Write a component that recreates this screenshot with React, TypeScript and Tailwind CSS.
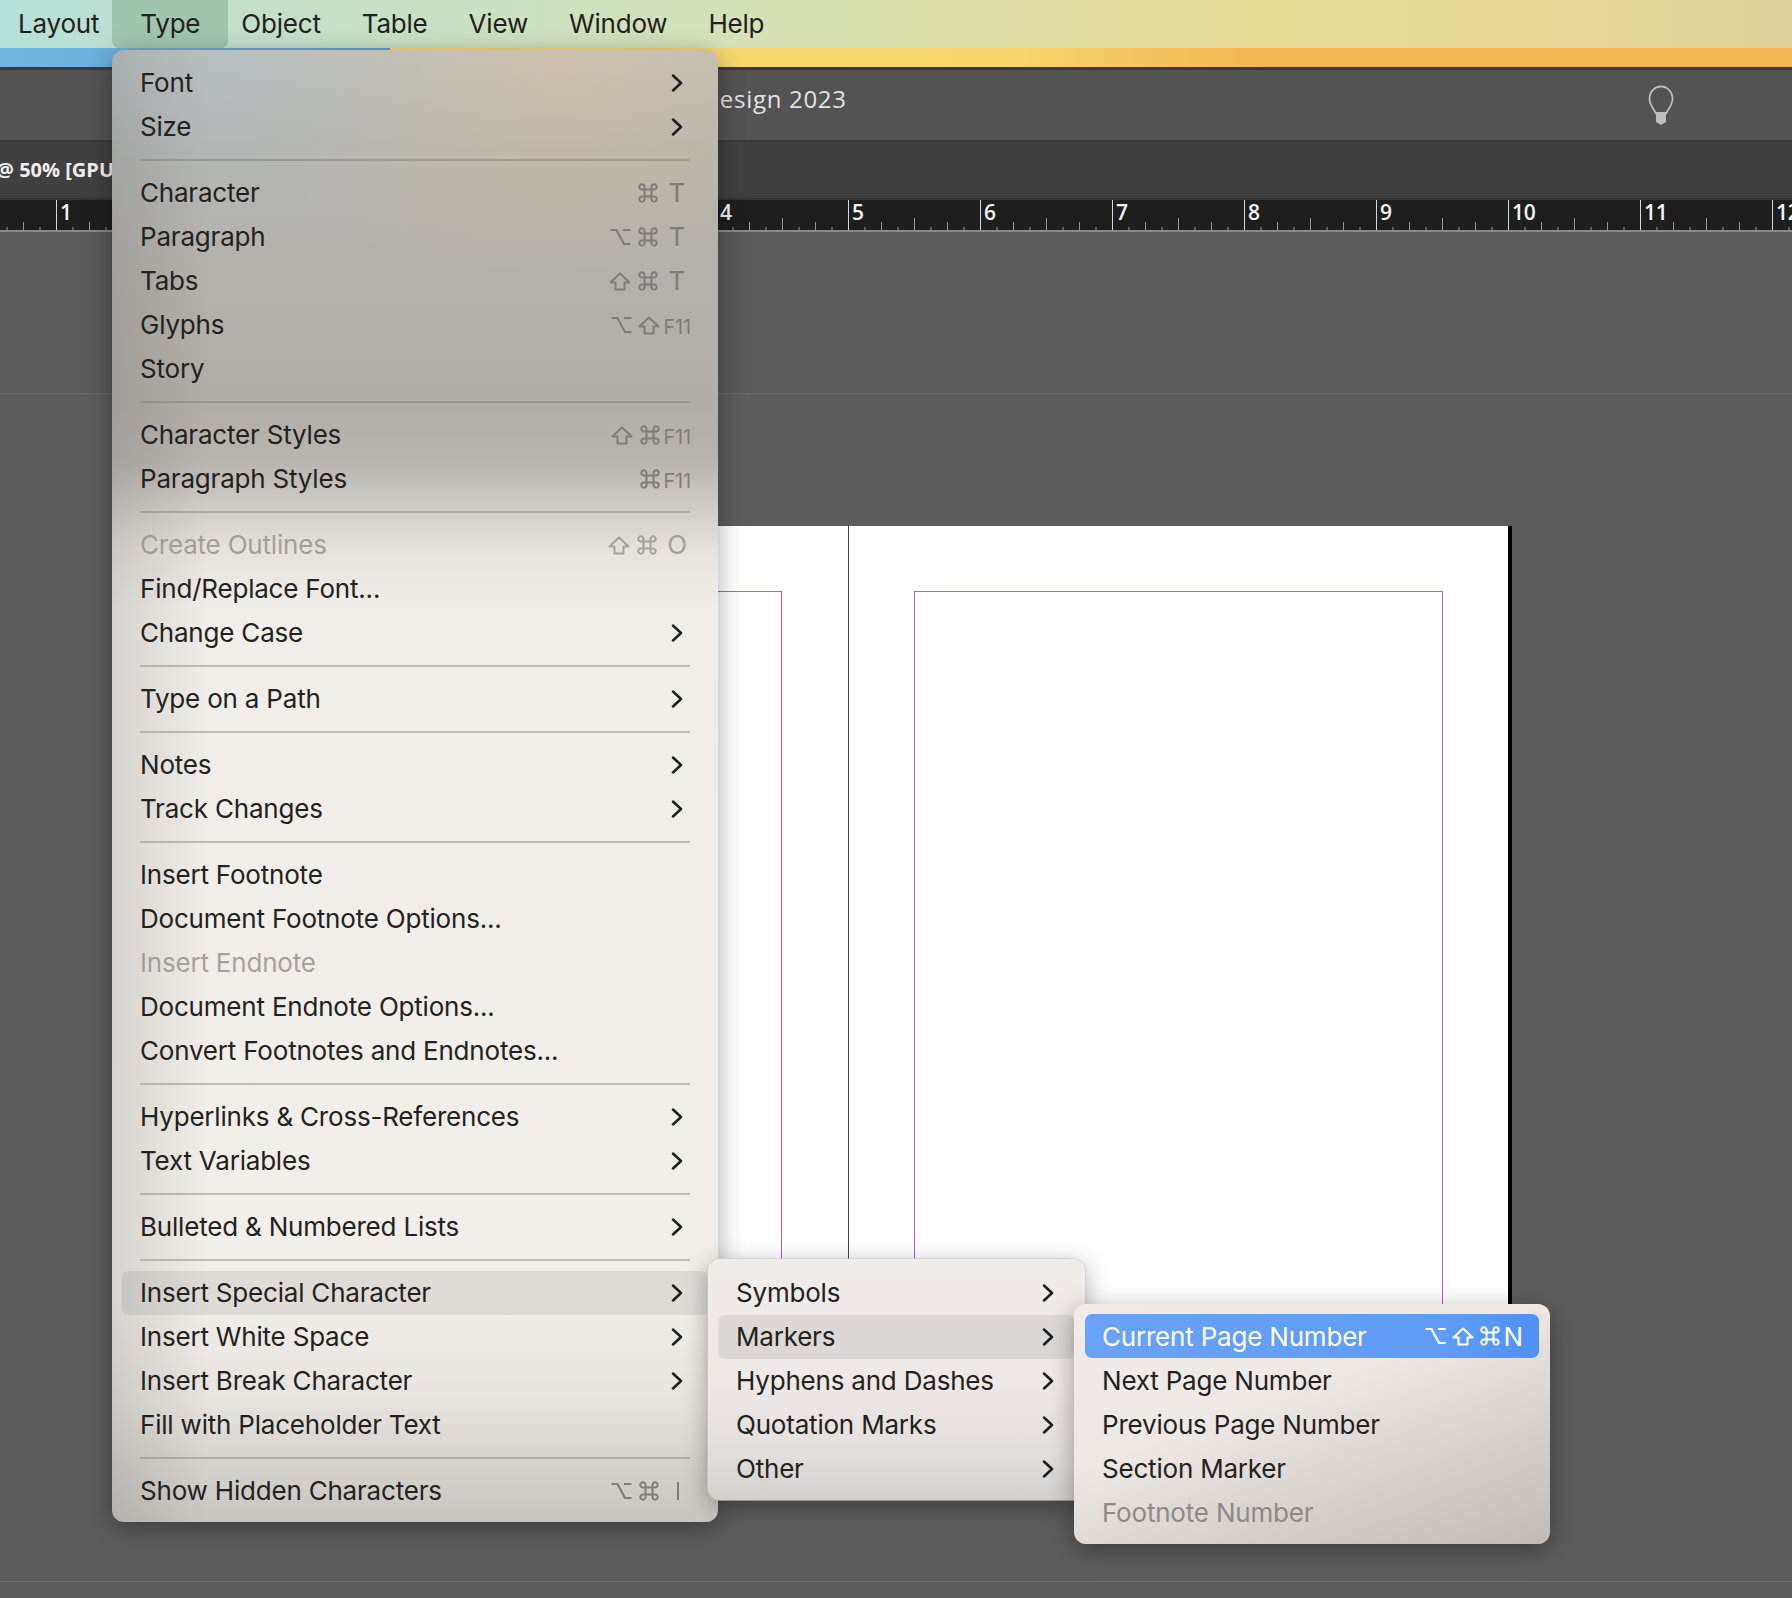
import React from "react";

type Row = {
  label: string;
  arrow?: boolean;
  disabled?: boolean;
  active?: boolean;
  keys?: string[];
};

// main Type menu, one array per separated group
const typeMenu: Row[][] = [
  [
    { label: "Font", arrow: true },
    { label: "Size", arrow: true },
  ],
  [
    { label: "Character", keys: ["cmd", "T"] },
    { label: "Paragraph", keys: ["opt", "cmd", "T"] },
    { label: "Tabs", keys: ["shift", "cmd", "T"] },
    { label: "Glyphs", keys: ["opt", "shift", "F11"] },
    { label: "Story" },
  ],
  [
    { label: "Character Styles", keys: ["shift", "cmd", "F11"] },
    { label: "Paragraph Styles", keys: ["cmd", "F11"] },
  ],
  [
    { label: "Create Outlines", disabled: true, keys: ["shift", "cmd", "O"] },
    { label: "Find/Replace Font..." },
    { label: "Change Case", arrow: true },
  ],
  [{ label: "Type on a Path", arrow: true }],
  [
    { label: "Notes", arrow: true },
    { label: "Track Changes", arrow: true },
  ],
  [
    { label: "Insert Footnote" },
    { label: "Document Footnote Options..." },
    { label: "Insert Endnote", disabled: true },
    { label: "Document Endnote Options..." },
    { label: "Convert Footnotes and Endnotes..." },
  ],
  [
    { label: "Hyperlinks & Cross-References", arrow: true },
    { label: "Text Variables", arrow: true },
  ],
  [{ label: "Bulleted & Numbered Lists", arrow: true }],
  [
    { label: "Insert Special Character", arrow: true, active: true },
    { label: "Insert White Space", arrow: true },
    { label: "Insert Break Character", arrow: true },
    { label: "Fill with Placeholder Text" },
  ],
  [{ label: "Show Hidden Characters", keys: ["opt", "cmd", "I"] }],
];

const specialChars: Row[] = [
  { label: "Symbols", arrow: true },
  { label: "Markers", arrow: true, active: true },
  { label: "Hyphens and Dashes", arrow: true },
  { label: "Quotation Marks", arrow: true },
  { label: "Other", arrow: true },
];

const markers = ["Next Page Number", "Previous Page Number", "Section Marker"];

const menuBar = ["Layout", "Type", "Object", "Table", "View", "Window", "Help"];

function Chevron() {
  return (
    <svg width="12" height="18" viewBox="0 0 12 18" fill="none" className="shrink-0">
      <path d="M2 1.5 10 9 2 16.5" stroke="#1f1e1d" strokeWidth="2.5" strokeLinecap="round" strokeLinejoin="round" />
    </svg>
  );
}

function CmdIcon() {
  return (
    <svg width="20" height="20" viewBox="0 0 20 20" fill="none" stroke="currentColor" strokeWidth="2" className="shrink-0">
      <path d="M6.5 6.5h7v7h-7zM6.5 6.5H4.3a2.6 2.6 0 1 1 2.2-2.4zM13.5 6.5V4.1a2.6 2.6 0 1 1 2.2 2.4zM13.5 13.5h2.2a2.6 2.6 0 1 1-2.2 2.4zM6.5 13.5v2.4a2.6 2.6 0 1 1-2.2-2.4z" />
    </svg>
  );
}

function OptIcon() {
  return (
    <svg width="21" height="18" viewBox="0 0 21 18" fill="none" stroke="currentColor" strokeWidth="2.2" className="shrink-0">
      <path d="M0.5 2h6L14 16h6.5M13 2h7.5" />
    </svg>
  );
}

function ShiftIcon() {
  return (
    <svg width="22" height="19" viewBox="0 0 22 19" fill="none" stroke="currentColor" strokeWidth="2" strokeLinejoin="round" className="shrink-0">
      <path d="M11 1.5 20.5 10.5H15.5V17.5H6.5V10.5H1.5Z" />
    </svg>
  );
}

function Keys({ keys, dim }: { keys: string[]; dim?: boolean }) {
  return (
    <span className={`flex items-center ml-auto ${dim ? "text-[#a3a19d]" : "text-[#7f7d79]"}`}>
      {keys.map((k) => {
        if (k === "cmd") return <span key={k} className="ml-[7px]"><CmdIcon /></span>;
        if (k === "opt") return <span key={k} className="ml-[6px]"><OptIcon /></span>;
        if (k === "shift") return <span key={k} className="ml-[6px]"><ShiftIcon /></span>;
        if (k === "F11")
          return (
            <span key={k} className="ml-[4px] -mr-[1px] text-[20px] leading-none mt-[3px]">
              F11
            </span>
          );
        if (k === "I")
          return <span key={k} className="ml-[18px] mr-[11px] w-[2px] h-[18px] bg-[#7f7d79]" />;
        if (k === "O")
          return (
            <span key={k} className="ml-[10px] mr-[3px] text-[26px] leading-none">
              {k}
            </span>
          );
        return (
          <span key={k} className="ml-[10px] mr-[5px] text-[26px] leading-none">
            {k}
          </span>
        );
      })}
    </span>
  );
}

function MenuRow({ row, sub }: { row: Row; sub?: boolean }) {
  return (
    <div
      className={`flex items-center h-[44px] mx-[10px] px-[18px] rounded-[7px] ${
        row.active ? "bg-[#3c3a37]/10" : ""
      } ${row.disabled ? "text-[#8f8d89]/80" : "text-[#232220]"}`}
    >
      <span className="whitespace-nowrap -translate-y-[1px]">{row.label}</span>
      {row.keys && <Keys keys={row.keys} dim={row.disabled} />}
      {row.arrow && (
        <span className={sub ? "ml-auto mr-[3px]" : "ml-auto mr-[7px]"}>
          <Chevron />
        </span>
      )}
    </div>
  );
}

function Ruler() {
  const ticks = [];
  for (let i = 0; i < 120; i++) {
    const x = 56 - 132 + i * 16.5;
    const step = i % 8;
    const top = step === 0 ? 0 : step === 4 ? 18 : step % 2 === 0 ? 22 : 27;
    ticks.push(<line key={i} x1={x + 0.5} x2={x + 0.5} y1={top} y2={30} stroke={step === 0 ? "#d8d8d8" : "#9a9a9a"} strokeWidth="1" />);
  }
  const labels: [string, number][] = [["1", 56], ["4", 716], ["5", 848], ["6", 980], ["7", 1112], ["8", 1244], ["9", 1376], ["10", 1508], ["11", 1640], ["12", 1772]];
  return (
    <svg width="1792" height="30" className="block">
      {ticks}
      {labels.map(([t, x]) => (
        <text key={t} x={x + 4} y={20} fill="#f4f4f4" fontSize="21" fontWeight="600" fontFamily="'Open Sans', sans-serif">
          {t}
        </text>
      ))}
    </svg>
  );
}

export default function App() {
  return (
    <div className="relative w-[1792px] h-[1598px] overflow-hidden bg-[#5b5b5b] tracking-[-0.2px] font-['Inter','Liberation_Sans',sans-serif]">
      {/* macOS menu bar */}
      <div className="flex h-[48px] items-center pl-[18px] pb-[2px] text-[26px] text-[#232220] bg-[linear-gradient(90deg,#b6e0d8_0%,#c6e0c8_18%,#d8e2b4_45%,#e9dd98_70%,#ead896_85%,#e0d09a_100%)]">
        {menuBar.map((m) => (
          <span
            key={m}
            className={
              m === "Type"
                ? "flex items-center justify-center h-[48px] -mb-[2px] pb-[2px] w-[116px] ml-[13px] mr-[13px] rounded-b-[7px] bg-[#7fa98c]/50"
                : m === "Layout"
                  ? ""
                  : "mr-[41px] last:mr-0"
            }
          >
            {m}
          </span>
        ))}
      </div>
      {/* desktop wallpaper strip */}
      <div className="flex h-[19px]">
        <div className="w-[390px] bg-[linear-gradient(90deg,#72b6de,#5c9fdc)]" />
        <div className="flex-1 bg-[linear-gradient(90deg,#f6d970_0%,#f7d56c_45%,#f2b651_62%,#f2b550_100%)]" />
      </div>
      <div className="h-[3px] bg-[#3a3a3a]" />

      {/* title bar */}
      <div className="flex items-center justify-between h-[70px] bg-[#535353] pl-[596px] pr-[118px]">
        <span className="whitespace-nowrap mb-[12px] text-[24px] font-medium tracking-[0.7px] text-[#e2e2e2] font-['Open_Sans',sans-serif]">
          Adobe InDesign 2023
        </span>
        <svg width="26" height="40" viewBox="0 0 26 40" fill="none">
          <path d="M13 1.5C6.5 1.5 1.5 7 1.5 14c0 6 3.8 9.5 6.5 14.5h10C20.7 23.5 24.5 20 24.5 14 24.5 7 19.5 1.5 13 1.5Z" stroke="#bdbdbd" strokeWidth="1.8" />
          <path d="M8 27h10v10l-5 3-5-3Z" fill="#bdbdbd" />
        </svg>
      </div>
      <div className="h-[2px] bg-[#383838]" />

      {/* document tab */}
      <div className="flex items-center h-[56px] bg-[#404040] -ml-[4px] text-[20px] font-bold tracking-normal text-[#efefef] font-['Open_Sans',sans-serif]">
        <span className="whitespace-nowrap">@ 50% [GPU Preview]</span>
      </div>
      <div className="h-[2px] bg-[#353535]" />
      <div className="h-[30px] bg-[#1e1e1e]">
        <Ruler />
      </div>
      <div className="h-[2px] bg-[#8a8a8a]" />

      {/* pasteboard */}
      <div className="h-[162px] bg-[#595959] border-b border-[#6b6b6b]" />
      <div className="h-[1188px] pt-[132px] pl-[187px] bg-[#5c5c5c] border-b border-[#6e6e6e]">
        <div className="flex w-[1325px] h-[914px] bg-white border-r-[4px] border-black">
          <div className="w-[662px] h-full pt-[65px] pb-[65px] pr-[66px] border-r border-[#444]">
            <div className="h-full ml-[66px] border border-[#a95cf0]" />
          </div>
          <div className="flex-1 h-full pt-[65px] pb-[65px] pl-[65px] pr-[65px]">
            <div className="h-full border border-[#a95cf0]" />
          </div>
        </div>
      </div>

      {/* Type menu */}
      <div className="absolute left-[112px] top-[50px] w-[606px] h-[1472px] pt-[11px] pb-[9px] rounded-[12px] text-[26px] shadow-[0_6px_26px_rgba(0,0,0,0.35)] bg-[radial-gradient(ellipse_320px_220px_at_22%_0%,rgba(165,190,215,0.3),transparent),radial-gradient(ellipse_340px_230px_at_72%_0%,rgba(220,195,150,0.4),transparent),linear-gradient(90deg,rgba(70,70,70,0.16)_0%,rgba(70,70,70,0)_16%),linear-gradient(180deg,#c0bfb8_0%,#b6b4ae_8%,#b1aea9_24%,#b8b5b0_28%,#cfccc7_31%,#e6e3de_34%,#f1eee9_38%,#f2efea_85%,#e6e3de_92%,#d6d3ce_96%,#c9c6c1_100%)]">
        {typeMenu.map((group, i) => (
          <div key={i}>
            {i > 0 && <div className="h-[2px] my-[10px] mx-[28px] bg-[#77736c]/40" />}
            {group.map((row) => (
              <MenuRow key={row.label} row={row} />
            ))}
          </div>
        ))}
      </div>

      {/* Insert Special Character submenu */}
      <div className="absolute left-[708px] top-[1259px] w-[377px] h-[241px] pt-[12px] rounded-[12px] text-[26px] ring-1 ring-[#cfcbc8]/60 shadow-[0_6px_24px_rgba(0,0,0,0.35)] bg-[linear-gradient(180deg,#f0ece9_0%,#eee9e6_50%,#e3dfdc_80%,#d3cfcc_100%)]">
        {specialChars.map((row) => (
          <MenuRow key={row.label} row={row} sub />
        ))}
      </div>

      {/* Markers submenu */}
      <div className="absolute left-[1074px] top-[1304px] w-[476px] h-[240px] pt-[10px] rounded-[12px] text-[26px] shadow-[0_6px_24px_rgba(0,0,0,0.35)] bg-[linear-gradient(160deg,#f1ece9_0%,#efe9e6_40%,#d7d1ce_70%,#c1bbb8_100%)]">
        <div className="flex items-center h-[44px] mx-[11px] pl-[17px] pr-[16px] rounded-[7px] text-white bg-[linear-gradient(90deg,#6aa2f9,#5f9cf8_80%,#4f90f5)]">
          <span className="whitespace-nowrap">Current Page Number</span>
          <span className="flex items-center ml-auto gap-[6px]">
            <OptIcon />
            <ShiftIcon />
            <CmdIcon />
            <span className="-ml-[2px]">N</span>
          </span>
        </div>
        {markers.map((label) => (
          <div key={label} className="flex items-center h-[44px] mx-[11px] px-[17px] text-[#232220]">
            {label}
          </div>
        ))}
        <div className="flex items-center h-[44px] mx-[11px] px-[17px] text-[#8e8987]">Footnote Number</div>
      </div>
    </div>
  );
}
